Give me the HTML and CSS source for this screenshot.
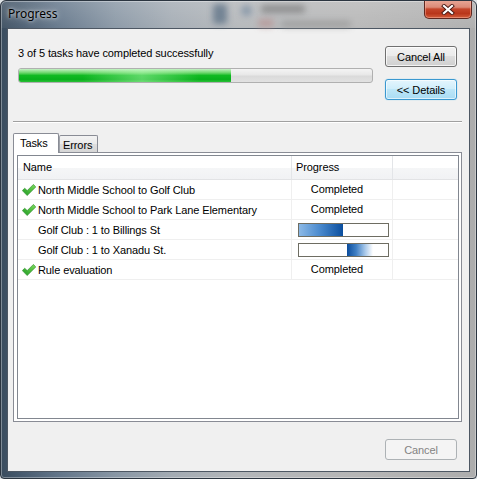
FILE: index.html
```html
<!DOCTYPE html>
<html>
<head>
<meta charset="utf-8">
<link rel="stylesheet" href="styles.css">
</head>
<body>
<div class="window">
  <div class="titlebar">
    <span class="blob b1"></span><span class="blob b2"></span><span class="blob b3"></span><span class="blob b4"></span><span class="blob b5"></span>
    <span class="title">Progress</span>
    <div class="close">
      <svg width="14" height="11" viewBox="0 0 14 11"><path d="M3 2 L11 9 M11 2 L3 9" stroke="#4a1a14" stroke-width="4" stroke-linecap="square" fill="none"/><path d="M3 2 L11 9 M11 2 L3 9" stroke="#ffffff" stroke-width="2.2" stroke-linecap="square" fill="none"/></svg>
    </div>
  </div>
  <div class="client">
    <div class="top">
      <div class="status">
        <div class="msg">3 of 5 tasks have completed successfully</div>
        <div class="bar"><div class="fill" style="width:60%"></div></div>
      </div>
      <div class="btns">
        <button class="btn">Cancel All</button>
        <button class="btn default">&lt;&lt; Details</button>
      </div>
    </div>
    <div class="sep"></div>
    <div class="tabs">
      <div class="tab active">Tasks</div>
      <div class="tab inactive">Errors</div>
    </div>
    <div class="panel">
      <div class="list">
        <div class="row head">
          <div class="c1 hc">Name</div>
          <div class="c2 hc">Progress</div>
          <div class="c3 hc"></div>
        </div>
        <div class="row">
          <div class="c1"><svg class="chk" width="14" height="12" viewBox="0 0 14 12"><defs><linearGradient id="g1" x1="0" y1="1" x2="1" y2="0"><stop offset="0" stop-color="#1c9a22"/><stop offset="1" stop-color="#7fdc5e"/></linearGradient></defs><polygon points="0.3,6.6 2.7,4.2 5.2,6.6 11.4,0.4 13.8,2.9 5.2,11.6" fill="url(#g1)" stroke="#2a8a2a" stroke-width="0.6"/></svg><span>North Middle School to Golf Club</span></div>
          <div class="c2 done">Completed</div>
          <div class="c3"></div>
        </div>
        <div class="row">
          <div class="c1"><svg class="chk" width="14" height="12" viewBox="0 0 14 12"><polygon points="0.3,6.6 2.7,4.2 5.2,6.6 11.4,0.4 13.8,2.9 5.2,11.6" fill="url(#g1)" stroke="#2a8a2a" stroke-width="0.6"/></svg><span>North Middle School to Park Lane Elementary</span></div>
          <div class="c2 done">Completed</div>
          <div class="c3"></div>
        </div>
        <div class="row">
          <div class="c1 indent"><span>Golf Club : 1 to Billings St</span></div>
          <div class="c2"><div class="mini"><div class="f f1" style="margin-left:0;width:44px"></div></div></div>
          <div class="c3"></div>
        </div>
        <div class="row">
          <div class="c1 indent"><span>Golf Club : 1 to Xanadu St.</span></div>
          <div class="c2"><div class="mini"><div class="f f2" style="margin-left:48px;width:26px"></div></div></div>
          <div class="c3"></div>
        </div>
        <div class="row">
          <div class="c1"><svg class="chk" width="14" height="12" viewBox="0 0 14 12"><polygon points="0.3,6.6 2.7,4.2 5.2,6.6 11.4,0.4 13.8,2.9 5.2,11.6" fill="url(#g1)" stroke="#2a8a2a" stroke-width="0.6"/></svg><span>Rule evaluation</span></div>
          <div class="c2 done">Completed</div>
          <div class="c3"></div>
        </div>
      </div>
    </div>
    <div class="footer">
      <button class="btn disabled">Cancel</button>
    </div>
  </div>
</div>
</body>
</html>
```
FILE: styles.css
```css
* { box-sizing: border-box; }
html, body { margin: 0; padding: 0; }
body {
  width: 477px; height: 479px; overflow: hidden; background: #dfe3e6;
  font-family: "Liberation Sans", Arial, sans-serif; font-size: 11px; color: #000;
  letter-spacing: -0.1px;
}
.window {
  width: 477px; height: 479px;
  border: 1px solid #2b3540;
  border-radius: 6px 6px 4px 4px;
  background: linear-gradient(90deg, #3a4c5e 0%, #46596d 4%, #627589 12%, #8896a4 24%, #a3abb3 36%, #b3b6b9 50%, #b6b6b6 75%, #adadad 100%);
  box-shadow: inset 0 0 0 1px rgba(255,255,255,0.35);
  display: flex; flex-direction: column;
  padding: 0 6px 6px 6px;
  overflow: hidden;
}
.titlebar {
  height: 27px; margin: 0 -6px; padding: 0 4px 0 7px;
  display: flex; justify-content: space-between; align-items: flex-start;
  position: relative;
  background: linear-gradient(rgba(255,255,255,0.18), rgba(255,255,255,0.05));
}
.blob { position: absolute; filter: blur(3px); border-radius: 3px; opacity: 0.75; }
.b1 { left: 212px; top: 3px; width: 14px; height: 20px; background: #5d7186; }
.b2 { left: 240px; top: 4px; width: 11px; height: 11px; border-radius: 50%; background: #7d90a4; }
.b3 { left: 260px; top: 4px; width: 44px; height: 8px; background: #808080; }
.b4 { left: 257px; top: 18px; width: 16px; height: 8px; background: #b89494; }
.b5 { left: 280px; top: 20px; width: 70px; height: 6px; background: #959595; }
.title {
  position: relative;
  font-family: "Noto Sans", "Open Sans", sans-serif; font-size: 12px; line-height: 16px;
  padding-top: 5px; color: #000; letter-spacing: 0;
  text-shadow: 0 0 6px rgba(255,255,255,0.8), 0 0 3px rgba(255,255,255,0.6);
}
.close {
  position: relative;
  width: 48px; height: 19px; margin-top: -1px;
  border: 1px solid #5f2820; border-top: none;
  border-radius: 0 0 5px 5px;
  background: linear-gradient(#e9a898 0%, #dc8a77 40%, #c5462b 50%, #b9361b 75%, #d25d3b 100%);
  box-shadow: inset 0 0 0 1px rgba(255,190,175,0.45);
  display: flex; align-items: center; justify-content: center;
}
.client {
  flex: 1;
  border: 1px solid #4d5763;
  background: #f0f0f0;
  display: flex; flex-direction: column;
}
.top { display: flex; gap: 12px; padding: 17px 12px 0 10px; }
.status { width: 355px; }
.msg { margin-top: 1px; line-height: 13px; height: 13px; white-space: nowrap; }
.bar {
  margin-top: 8px; height: 15px;
  border: 1px solid #b0b0b0; border-radius: 3px;
  background: linear-gradient(#f4f4f4 0%, #e8e8e8 45%, #dadada 55%, #e2e2e2 100%);
  overflow: hidden;
}
.fill {
  height: 100%;
  background:
    linear-gradient(90deg, rgba(200,255,200,0) 30%, rgba(190,255,190,0.45) 58%, rgba(200,255,200,0) 85%),
    linear-gradient(#c4f1c4 0%, #6ad66a 30%, #10ba22 50%, #08b01c 80%, #2cc038 100%);
}
.btns { display: flex; flex-direction: column; gap: 12px; }
.btn {
  width: 72px; height: 21px; padding: 0;
  font-family: "Liberation Sans", Arial, sans-serif; font-size: 11px; color: #000; letter-spacing: -0.1px;
  border: 1px solid #707070; border-radius: 3px;
  background: linear-gradient(#f2f2f2 0%, #ebebeb 45%, #dddddd 50%, #cfcfcf 100%);
  box-shadow: inset 0 0 0 1px rgba(255,255,255,0.75);
}
.btn.default {
  border-color: #3a98d0;
  background: linear-gradient(#e4f5fd 0%, #d0eefb 45%, #bde6f8 50%, #a9dcf4 100%);
  box-shadow: inset 0 0 0 1px rgba(255,255,255,0.6), 0 0 1px #62c0ec;
}
.btn.disabled {
  border-color: #adb2b5; background: #f4f4f4; color: #838383; box-shadow: none;
}
.sep { margin: 21px 7px 0 5px; border-top: 1px solid #a0a0a0; border-bottom: 1px solid #ffffff; }
.tabs {
  display: flex; align-items: flex-end;
  margin: 10px 0 -1px 5px;
  position: relative; z-index: 1;
}
.tab {
  border: 1px solid #898c95; border-bottom: none;
  border-radius: 2px 2px 0 0;
  line-height: 13px; padding-top: 3px; white-space: nowrap;
}
.tab.active { width: 46px; height: 20px; background: #ffffff; padding-left: 6px; }
.tab.inactive {
  width: 39px; height: 17px; margin-bottom: 1px; padding-left: 3px;
  background: linear-gradient(#f3f3f3 0%, #eaeaea 50%, #dedede 51%, #d6d6d6 100%);
  border-left-color: #a0a3aa;
}
.panel {
  flex: 1; margin: 0 7px 0 5px;
  border: 1px solid #898c95; background: #ffffff;
  padding: 2px 2px 2px 3px;
  display: flex;
}
.list { flex: 1; border: 1px solid #828790; display: flex; flex-direction: column; background: #fff; }
.row { display: flex; height: 20px; border-bottom: 1px solid #efefef; }
.row.head {
  height: 24px; border-bottom: 1px solid #e2e3e5;
  background: linear-gradient(#ffffff 0%, #ffffff 50%, #f5f6f7 51%, #f1f2f4 100%);
}
.c1 { width: 274px; border-right: 1px solid #efefef; display: flex; align-items: center; padding-left: 4px; white-space: nowrap; overflow: hidden; }
.c2 { width: 101px; border-right: 1px solid #efefef; }
.c3 { flex: 1; }
.hc { line-height: 23px; border-right-color: #e3e5e8; }
.c1.hc { padding-left: 5px; display: block; }
.c2.hc { padding-left: 4px; }
.chk { flex: none; margin-right: 2px; }
.c1.indent { padding-left: 20px; }
.c1 span { line-height: 17px; padding-top: 1px; }
.done { text-align: center; padding-right: 10px; line-height: 19px; padding-top: 0; }
.mini {
  margin: 3px 0 0 6px; width: 91px; height: 14px;
  border: 1px solid #6e6d62; background: #ffffff;
  display: flex;
}
.f { height: 100%; flex: none; }
.f1 { background: linear-gradient(90deg, #8cb9e6 0%, #4d8ccf 45%, #0a4e9e 100%); }
.f2 { background: linear-gradient(90deg, #0a4c9c 0%, #3f7fc4 35%, #a9c9ea 70%, #ffffff 100%); }
.footer { display: flex; justify-content: flex-end; padding: 17px 12px 11px; }
```
